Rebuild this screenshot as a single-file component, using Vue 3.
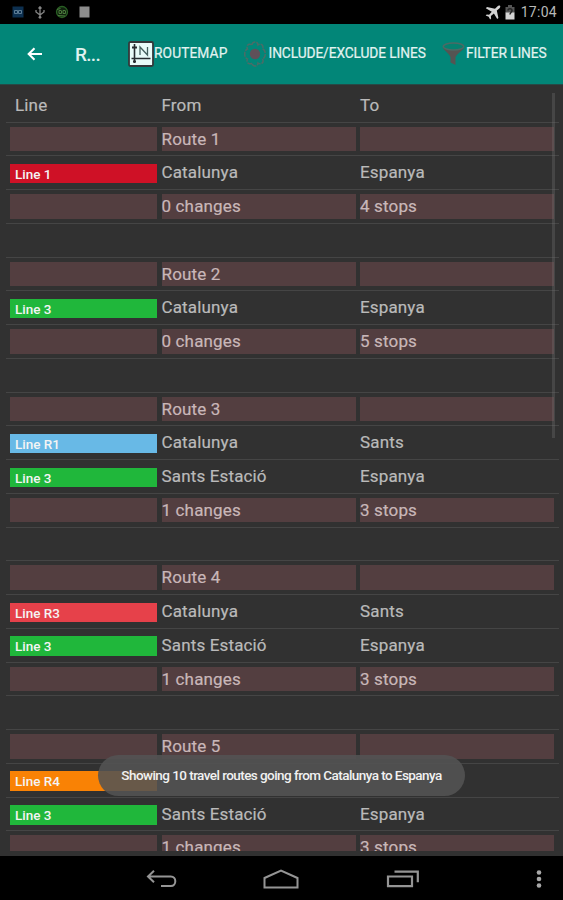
<template>
  <div class="screen">
    <header class="status-bar">
      <div class="notifications">
        <svg width="12" height="12" viewBox="0 0 12 12">
          <rect x="0.5" y="0.5" width="11" height="11" fill="#0d3050" />
          <path d="M2.500 4.500h3v3h-3zM6.500 4.500h3v3h-3z" fill="none" stroke="#5d7c94" stroke-width="1" />
        </svg>
        <svg width="12" height="13" viewBox="0 0 12 13">
          <path d="M6 1v11M2 4v2l4 3M10 4v2L6 9M4.500 2.500L6 .8l1.500 1.700" fill="none" stroke="#858585" stroke-width="1.300" />
          <circle cx="6" cy="11.300" r="1.400" fill="#858585" />
        </svg>
        <svg width="14" height="14" viewBox="0 0 14 14">
          <circle cx="7" cy="7" r="5.500" fill="#10200e" stroke="#285f23" stroke-width="1.300" />
          <path d="M2 4.500l3.500-1M6.500 5.500H4v3h2.500V6M10.500 5.500H8v3h2.500V6M3 10.500l7 .5" fill="none" stroke="#4a7a3c" stroke-width="1" />
        </svg>
        <svg width="11" height="12" viewBox="0 0 11 12">
          <rect x="0.500" y="0.500" width="10" height="11" fill="#8d8d8d" />
        </svg>
      </div>
      <div class="system">
        <svg width="16" height="15" viewBox="0 0 16 15">
          <path d="M15 .8c-.8-.7-2 0-2.700.7L10 3.700 2 2 .8 3.200l6 3.500-2.700 3-2.400-.3-1 1 3 1.400 1.400 2.700 1-.9-.2-2.500 3-2.600 3.300 5.600 1.200-1.200-1.600-7.300L14.300 3.400c.8-.8 1.400-1.900.7-2.600z" fill="#d2d2d2" />
        </svg>
        <svg width="10" height="15" viewBox="0 0 10 15">
          <path d="M3 0h4v2h2.500v6h-9V2H3z" fill="#555" />
          <path d="M.5 7.500h9v7h-9z" fill="#d5d5d5" />
          <path d="M3 5.500c0-2.500 4-2.500 4 0 0 1.700-2 1.700-2 4" fill="none" stroke="#242424" stroke-width="1.500" />
        </svg>
        <span class="clock">17:04</span>
      </div>
    </header>

    <nav class="action-bar">
      <button class="back" type="button" aria-label="Back">
        <svg width="16" height="14" viewBox="0 0 16 14">
          <path d="M15 7H2M7.500 1.200L1.700 7l5.800 5.800" fill="none" stroke="#fff" stroke-width="2.100" />
        </svg>
      </button>
      <h1 class="title">R...</h1>
      <button class="action routemap" type="button">
        <svg width="26" height="26" viewBox="0 0 26 26">
          <rect x="1" y="1" width="24" height="24" rx="1.500" fill="#e9fbf8" stroke="#35383a" stroke-width="1.800" />
          <path d="M6.500 3v19M3.500 17.500h19" stroke="#282d30" stroke-width="1.600" />
          <path d="M4 6.500h5M5 20.500h3" stroke="#282d30" stroke-width="1.800" />
          <path d="M12 14V6l7.500 8V6" fill="none" stroke="#47615f" stroke-width="1.300" />
        </svg>
        <span>ROUTEMAP</span>
      </button>
      <button class="action lines" type="button">
        <svg width="24" height="26" viewBox="0 0 24 26">
          <path d="M9 4c0-4 6-4 6 0 3.500-2.500 6 1 4.500 4 3.700 1 3.700 9 0 10 1.500 3-1 6.500-4.500 4 0 4-6 4-6 0-3.500 2.500-6-1-4.500-4-3.700-1-3.700-9 0-10C3 5 5.500 1.500 9 4z" fill="none" stroke="#4b6c67" stroke-width="1.500" stroke-dasharray="5 1" />
          <circle cx="12" cy="13" r="5.200" fill="#5f5059" />
        </svg>
        <span>INCLUDE/EXCLUDE LINES</span>
      </button>
      <button class="action filter" type="button">
        <svg width="23" height="24" viewBox="0 0 23 24">
          <path d="M1 5c0 3 5 5 7.500 10v5.500l5 2.500v-8C16.500 10 22 8 22 5c-3 3-18 3-21 0z" fill="#555452" />
          <ellipse cx="11.500" cy="4.500" rx="10.200" ry="3.600" fill="#07806f" stroke="#4c6a65" stroke-width="1.500" />
        </svg>
        <span>FILTER LINES</span>
      </button>
    </nav>

    <main class="content">
      <div class="list">
        <div class="row head">
          <span class="cell">Line</span>
          <span class="cell">From</span>
          <span class="cell">To</span>
        </div>
        <template v-for="(route, index) in routes" :key="index">
          <div class="row summary">
            <span class="cell"></span>
            <span class="cell">Route {{ index + 1 }}</span>
            <span class="cell"></span>
          </div>
          <div v-for="leg in route.legs" :key="leg.line" class="row">
            <span class="cell badge" :style="{ background: leg.color }">{{ leg.line }}</span>
            <span class="cell">{{ leg.from }}</span>
            <span class="cell">{{ leg.to }}</span>
          </div>
          <div class="row summary">
            <span class="cell"></span>
            <span class="cell">{{ route.legs.length - 1 }} changes</span>
            <span class="cell">{{ route.stops }} stops</span>
          </div>
          <div class="row"></div>
        </template>
      </div>
      <div class="scrollbar"></div>
    </main>

    <footer class="nav-bar">
      <svg class="nav-back" width="32" height="18" viewBox="0 0 32 18">
        <path d="M8 .8L2 6.500l6 5.700M2.500 6.500h22.300c6 0 6 9.500 0 9.500H15" fill="none" stroke="#959595" stroke-width="2" />
      </svg>
      <svg class="nav-home" width="36" height="20" viewBox="0 0 36 20">
        <path d="M1.500 18.500V9L18 1.500 34.500 9v9.500z" fill="none" stroke="#959595" stroke-width="2" />
      </svg>
      <svg class="nav-recent" width="34" height="18" viewBox="0 0 34 18">
        <path d="M2 6.500h24v9.700H2zM8.500 1.700h23.300v10.500" fill="none" stroke="#959595" stroke-width="2.200" />
      </svg>
      <svg class="nav-more" width="6" height="18" viewBox="0 0 6 18">
        <circle cx="3" cy="2.500" r="2.300" fill="#a8a8a8" />
        <circle cx="3" cy="9" r="2.300" fill="#a8a8a8" />
        <circle cx="3" cy="15.500" r="2.300" fill="#a8a8a8" />
      </svg>
    </footer>

    <div class="toast">Showing 10 travel routes going from Catalunya to Espanya</div>
  </div>
</template>

<script setup>
import { ref } from 'vue';

const line3 = { line: 'Line 3', color: '#20b73b', from: 'Sants Estació', to: 'Espanya' };

const routes = ref([
  {
    stops: 4,
    legs: [{ line: 'Line 1', color: '#cf1126', from: 'Catalunya', to: 'Espanya' }],
  },
  {
    stops: 5,
    legs: [{ ...line3, from: 'Catalunya' }],
  },
  {
    stops: 3,
    legs: [{ line: 'Line R1', color: '#68b9e6', from: 'Catalunya', to: 'Sants' }, line3],
  },
  {
    stops: 3,
    legs: [{ line: 'Line R3', color: '#e6414a', from: 'Catalunya', to: 'Sants' }, line3],
  },
  {
    stops: 3,
    legs: [{ line: 'Line R4', color: '#f98205', from: '', to: '' }, line3],
  },
]);
</script>

<style>
body {
  margin: 0;
  background: #000;
}
</style>

<style scoped>
.screen {
  position: relative;
  display: flex;
  flex-direction: column;
  width: 563px;
  height: 900px;
  overflow: hidden;
  background: #000;
  font-family: Roboto, "Liberation Sans", sans-serif;
}

.screen * {
  box-sizing: border-box;
}

svg {
  display: block;
  flex: none;
}

.status-bar {
  display: flex;
  flex: none;
  align-items: center;
  justify-content: space-between;
  height: 23.500px;
  padding: 1px 6px 0 12px;
}

.notifications {
  display: flex;
  align-items: center;
  gap: 9.500px;
}

.system {
  display: flex;
  align-items: center;
  gap: 4px;
}

.clock {
  margin-left: 2px;
  color: #b8b8b8;
  font-size: 14px;
  letter-spacing: 0.300px;
}

.action-bar {
  display: flex;
  flex: none;
  align-items: center;
  height: 60px;
  background: #028678;
}

button {
  padding: 0;
  border: none;
  background: none;
  font-family: inherit;
}

.back {
  margin-left: 27px;
}

.title {
  width: 53px;
  margin: 1px 0 0 32px;
  color: #e0f2f0;
  font-size: 19px;
  font-weight: 500;
  letter-spacing: -0.700px;
}

.action {
  display: flex;
  flex: none;
  align-items: center;
  color: #e3f3f1;
  font-size: 13.750px;
  font-weight: 400;
  letter-spacing: -0.100px;
  white-space: nowrap;
}

.action span {
  margin-top: -1px;
  -webkit-text-stroke: 0.200px #e3f3f1;
}

.routemap {
  width: 99px;
  letter-spacing: 0.100px;
}

.lines {
  gap: 2px;
  width: 182px;
  margin-left: 15.500px;
}

.filter {
  gap: 1.500px;
  margin-left: 17px;
}

.content {
  position: relative;
  flex: none;
  height: 772.500px;
  padding: 4.250px 4px 5px 6px;
  background: #313131;
  border-top: 1px solid #264a47;
}

.list {
  height: 762.250px;
  overflow: hidden;
}

.row {
  display: grid;
  grid-template-columns: 147px 194px 194px;
  column-gap: 4.500px;
  height: 33.750px;
  padding: 4px 4px 0;
  border-bottom: 1px solid #454545;
}

.cell {
  height: 24.500px;
  color: #bababa;
  font-size: 17px;
  line-height: 25px;
  letter-spacing: 0.150px;
  white-space: nowrap;
  -webkit-text-stroke: 0.200px currentColor;
}

.head .cell:first-child {
  padding-left: 5px;
}

.summary .cell {
  background: #533e40;
  color: #c9b7b9;
}

.badge {
  height: 19.500px;
  margin-top: 3.500px;
  padding-left: 5px;
  color: #f4f4f4;
  font-size: 13.500px;
  font-weight: 500;
  line-height: 21px;
  letter-spacing: 0;
  -webkit-text-stroke: 0;
}

.scrollbar {
  position: absolute;
  top: 8px;
  right: 8px;
  width: 3px;
  height: 345px;
  background: rgba(120, 120, 120, 0.3);
}

.nav-bar {
  display: flex;
  flex: 1;
  align-items: center;
  padding: 2px 21px 0 146px;
}

.nav-home {
  margin-left: 85px;
}

.nav-recent {
  margin-left: 87px;
}

.nav-more {
  margin-left: auto;
}

.toast {
  position: absolute;
  top: 755px;
  left: 98px;
  width: 367px;
  height: 41px;
  border-radius: 21px;
  background: rgba(83, 83, 83, 0.880);
  color: #f1f1f1;
  font-size: 13.500px;
  font-weight: 500;
  line-height: 41px;
  letter-spacing: -0.560px;
  text-align: center;
  white-space: nowrap;
}
</style>
